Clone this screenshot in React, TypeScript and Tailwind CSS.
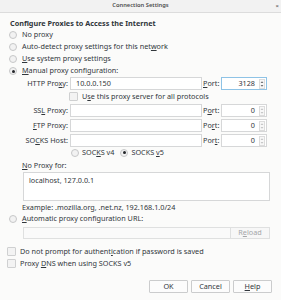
import type { ReactNode } from "react";

function U({ children }: { children: ReactNode }) {
  return <span className="underline decoration-[0.5px] underline-offset-[1px]">{children}</span>;
}

function Radio({ checked = false }: { checked?: boolean }) {
  return (
    <span className="flex h-[8px] w-[8px] shrink-0 items-center justify-center rounded-full border border-[#c6c7c8] bg-[#f2f2f2]">
      {checked && <span className="h-[3px] w-[3px] rounded-full bg-[#232629]" />}
    </span>
  );
}

function Check() {
  return <span className="h-[9px] w-[9px] shrink-0 rounded-[1px] border border-[#cfd0d1] bg-[#f3f3f3]" />;
}

function Spin({ dim }: { dim?: boolean }) {
  const c = dim ? "#c2c3c4" : "#6b6e71";
  return (
    <svg width="6" height="10" viewBox="0 0 6 10" className="shrink-0">
      <rect x="0.5" y="0.5" width="5" height="9" fill="#f7f7f7" stroke="#dcdcdc" />
      <path d="M1.6 4 L3 2.3 L4.4 4 Z" fill={c} />
      <path d="M1.6 6 L3 7.7 L4.4 6 Z" fill={c} />
    </svg>
  );
}

function Port({ value, focus }: { value: string; focus?: boolean }) {
  return (
    <div
      className={`flex h-full w-[46px] items-center border bg-white pr-[1px] ${
        focus ? "border-[#8ec3e6]" : "border-[#d6d7d8]"
      }`}
    >
      <span className="flex-1 pr-[4px] text-right">{value}</span>
      <Spin dim={!focus} />
    </div>
  );
}

function ProxyRow({ label, value, port, focus, portLabel, cls }: {
  label: ReactNode;
  value?: string;
  port: string;
  focus?: boolean;
  portLabel: ReactNode;
  cls: string;
}) {
  return (
    <div className={`flex h-[13px] items-center ${cls}`}>
      <div className="w-[70px] pr-[2px] text-right">{label}</div>
      <div className="flex h-full w-[132px] items-center border border-[#d6d7d8] bg-white pl-[5px]">{value}</div>
      <div className="w-[19px] pl-[1px]">{portLabel}</div>
      <Port value={port} focus={focus} />
    </div>
  );
}

function Btn({ children }: { children: ReactNode }) {
  return (
    <div className="flex h-[13px] w-[39px] items-center justify-center rounded-[1px] border border-[#cbcccd] bg-[#fcfcfc]">
      {children}
    </div>
  );
}

export default function App() {
  return (
    <div className="h-[300px] w-[281px] overflow-hidden bg-[#fbfbfa] font-['Noto_Sans',sans-serif] text-[7.25px] leading-none text-[#31363b]">
      {/* title bar */}
      <div className="relative flex h-[13px] items-center justify-center border-b border-[#dcdcdc] bg-[#f2f2f2]">
        <span className="text-[5.75px] font-semibold text-[#4d4d4d]">Connection Settings</span>
        <span className="absolute right-[2px] top-[3px] text-[6px] font-bold text-[#6a6a6a]">×</span>
      </div>

      <div className="mt-[6px] flex h-[10px] items-center pl-[10px] font-bold">
        Configure Proxies to Access the Internet
      </div>

      <div className="flex h-[12px] items-center gap-[5px] pl-[9px]">
        <Radio /> No proxy
      </div>
      <div className="flex h-[12px] items-center gap-[5px] pl-[9px]">
        <Radio /> <span>Auto-detect proxy settings for this net<U>w</U>ork</span>
      </div>
      <div className="flex h-[12px] items-center gap-[5px] pl-[9px]">
        <Radio /> <span><U>U</U>se system proxy settings</span>
      </div>
      <div className="flex h-[12px] items-center gap-[5px] pl-[9px]">
        <Radio checked /> <span><U>M</U>anual proxy configuration:</span>
      </div>

      <ProxyRow cls="" label={<>HTTP Pro<U>x</U>y:</>} value="10.0.0.150" portLabel={<><U>P</U>ort:</>} port="3128" focus />

      <div className="flex h-[13px] items-center gap-[4px] pl-[69px]">
        <Check />
        <span>U<U>s</U>e this proxy server for all protocols</span>
      </div>

      <ProxyRow cls="mt-[1px]" label={<>SS<U>L</U> Proxy:</>} portLabel={<>P<U>o</U>rt:</>} port="0" />
      <ProxyRow cls="mt-[2px]" label={<><U>F</U>TP Proxy:</>} portLabel={<>Po<U>r</U>t:</>} port="0" />
      <ProxyRow cls="mt-[2px]" label={<>SO<U>C</U>KS Host:</>} portLabel={<>Por<U>t</U>:</>} port="0" />

      <div className="flex h-[11px] items-center pl-[71px]">
        <Radio />
        <span className="ml-[3px]">SOC<U>K</U>S v4</span>
        <span className="ml-[6px]"><Radio checked /></span>
        <span className="ml-[3px]">SOCKS <U>v</U>5</span>
      </div>

      <div className="mt-[2px] flex h-[11px] items-center pl-[22px]">
        <span><U>N</U>o Proxy for:</span>
      </div>
      <div className="ml-[23px] mt-[1px] h-[29px] w-[247px] border border-[#d6d7d8] bg-white pl-[5px] pt-[4px]">
        localhost, 127.0.0.1
      </div>
      <div className="mt-[1px] flex h-[11px] items-center pl-[22px]">
        Example: .mozilla.org, .net.nz, 192.168.1.0/24
      </div>

      <div className="flex h-[12px] items-center gap-[5px] pl-[9px]">
        <Radio /> <span><U>A</U>utomatic proxy configuration URL:</span>
      </div>
      <div className="ml-[23px] mt-[2px] flex h-[12px] w-[247px]">
        <div className="h-full flex-1 border border-[#dfe0e0] bg-[#fafafa]" />
        <div className="flex h-full w-[39px] items-center justify-center border border-l-0 border-[#dfe0e0] bg-[#f7f7f7] text-[#a4a6a8]">
          R<U>e</U>load
        </div>
      </div>

      <div className="mt-[7px] flex h-[11px] items-center gap-[4px] pl-[7px]">
        <Check />
        <span>Do not prompt for authent<U>i</U>cation if password is saved</span>
      </div>
      <div className="mt-[1px] flex h-[11px] items-center gap-[4px] pl-[7px]">
        <Check />
        <span>Proxy <U>D</U>NS when using SOCKS v5</span>
      </div>

      <div className="mt-[11px] flex justify-end gap-[3px] pr-[9px]">
        <Btn>OK</Btn>
        <Btn>Cancel</Btn>
        <Btn><span><U>H</U>elp</span></Btn>
      </div>
    </div>
  );
}
